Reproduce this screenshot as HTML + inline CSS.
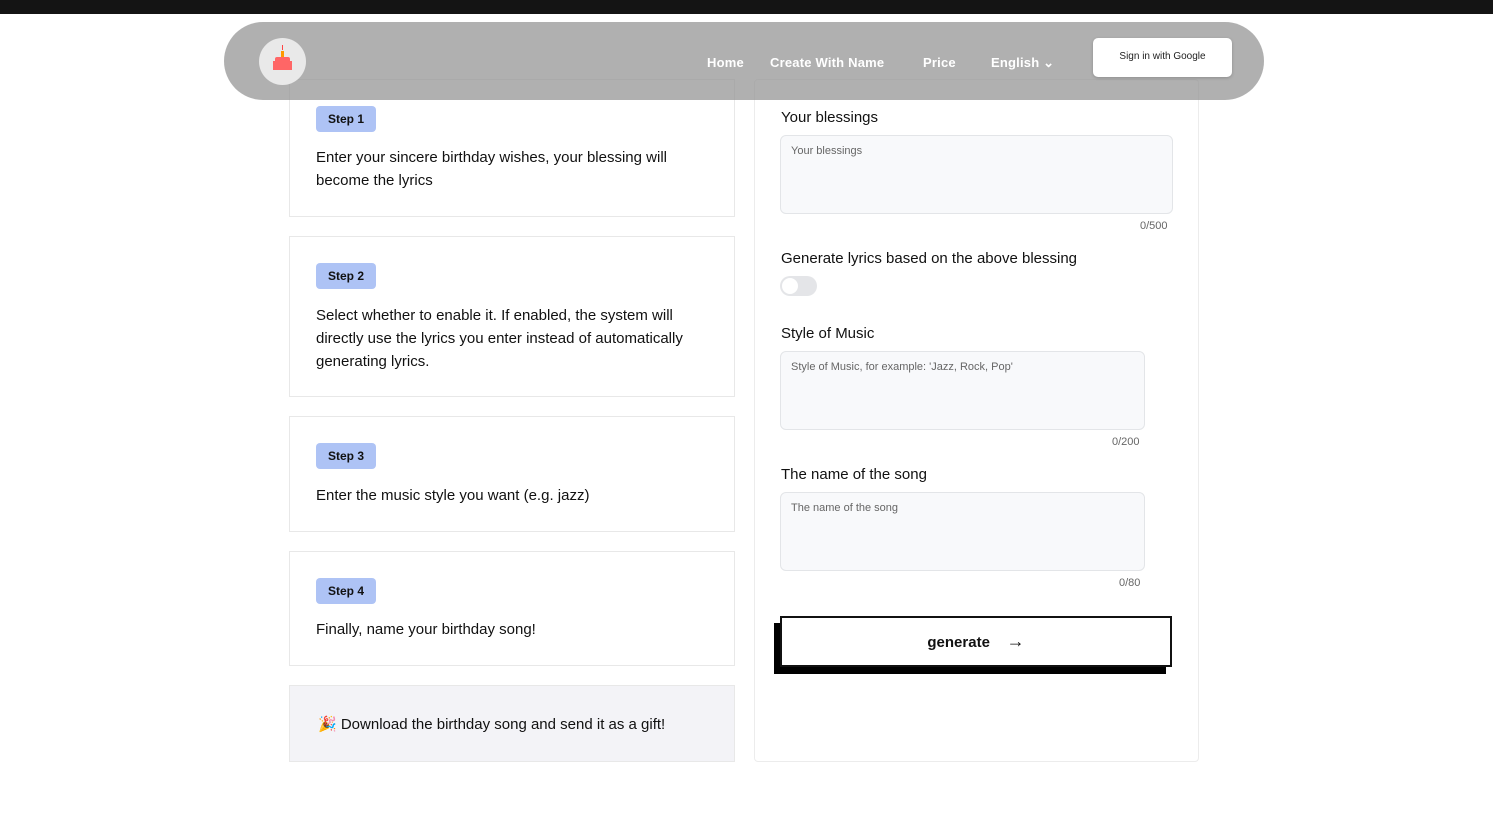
<!DOCTYPE html>
<html><head><meta charset="utf-8"><style>
*{box-sizing:border-box;margin:0;padding:0}
body{width:1493px;height:823px;background:#fff;font-family:"Liberation Sans",sans-serif;color:#111;position:relative;overflow:hidden}
.abs{position:absolute}
.card{position:absolute;left:289px;width:446px;border:1px solid #e8e8e8;background:#fff}
.step{position:absolute;left:26px;width:60px;height:26px;background:#aec3f5;border-radius:4px;font-size:12px;font-weight:bold;line-height:26px;text-align:center;color:#111}
.txt{position:absolute;left:26px;font-size:15px;line-height:23px;color:#111;width:390px}
.lbl{position:absolute;left:781px;font-size:15px;color:#111}
.ta{position:absolute;left:780px;background:#f8f9fb;border:1px solid #e3e5e8;border-radius:6px;font-size:11px;color:#666;padding:9px 10px}
.cnt{position:absolute;font-size:11px;color:#666}
.nav{position:absolute;top:55px;color:#fff;font-size:13px;font-weight:bold;letter-spacing:.2px}
</style></head><body>
<div class="abs" style="left:0;top:0;width:1493px;height:14px;background:#141414"></div>

<div class="card" style="top:79px;height:138px">
<div class="step" style="top:26px">Step 1</div>
<div class="txt" style="top:66px">Enter your sincere birthday wishes, your blessing will become the lyrics</div></div>
<div class="card" style="top:236px;height:161px">
<div class="step" style="top:26px">Step 2</div>
<div class="txt" style="top:67px;width:392px">Select whether to enable it. If enabled, the system will directly use the lyrics you enter instead of automatically generating lyrics.</div></div>
<div class="card" style="top:416px;height:116px">
<div class="step" style="top:26px">Step 3</div>
<div class="txt" style="top:67px">Enter the music style you want (e.g. jazz)</div></div>
<div class="card" style="top:551px;height:115px">
<div class="step" style="top:26px">Step 4</div>
<div class="txt" style="top:66px">Finally, name your birthday song!</div></div>
<div class="card" style="top:685px;height:77px;background:#f3f3f7">
<div class="txt" style="top:27px;left:28px;width:420px">🎉 Download the birthday song and send it as a gift!</div></div>

<div class="abs" style="left:754px;top:79px;width:445px;height:683px;border:1px solid #ececec;border-radius:4px"></div>
<div class="lbl" style="top:109px">Your blessings</div>
<div class="ta" style="top:135px;width:393px;height:79px">Your blessings</div>
<div class="cnt" style="top:220px;left:1140px">0/500</div>
<div class="lbl" style="top:250px">Generate lyrics based on the above blessing</div>
<div class="abs" style="left:780px;top:276px;width:37px;height:20px;border-radius:10px;background:#e4e5e8"><div class="abs" style="left:2px;top:2px;width:16px;height:16px;border-radius:50%;background:#fff"></div></div>
<div class="lbl" style="top:325px">Style of Music</div>
<div class="ta" style="top:351px;width:365px;height:79px">Style of Music, for example: 'Jazz, Rock, Pop'</div>
<div class="cnt" style="top:436px;left:1112px">0/200</div>
<div class="lbl" style="top:466px">The name of the song</div>
<div class="ta" style="top:492px;width:365px;height:79px">The name of the song</div>
<div class="cnt" style="top:577px;left:1119px">0/80</div>
<div class="abs" style="left:774px;top:623px;width:392px;height:51px;background:#000"></div>
<div class="abs" style="left:780px;top:616px;width:392px;height:51px;background:#fff;border:2px solid #111;text-align:center;line-height:47px;font-size:15px;font-weight:bold">generate &nbsp;&nbsp;&nbsp;<span style="font-size:18px;font-weight:normal">→</span></div>

<div class="abs" style="left:224px;top:22px;width:1040px;height:78px;border-radius:39px;background:rgba(150,150,150,0.75)"></div>
<div class="abs" style="left:259px;top:38px;width:47px;height:47px;border-radius:50%;background:#e9e9e9">
<div class="abs" style="left:23px;top:7px;width:1px;height:5px;background:#f44"></div>
<div class="abs" style="left:22px;top:13px;width:3px;height:6px;background:#f90"></div>
<div class="abs" style="left:16px;top:19px;width:15px;height:4px;background:#f66;border-radius:2px 2px 0 0"></div>
<div class="abs" style="left:14px;top:23px;width:19px;height:9px;background:#f66"></div>
</div>
<div class="nav" style="left:707px">Home</div>
<div class="nav" style="left:770px">Create With Name</div>
<div class="nav" style="left:923px">Price</div>
<div class="nav" style="left:991px">English ⌄</div>
<div class="abs" style="left:1093px;top:38px;width:139px;height:39px;background:#fff;border-radius:5px;font-size:10px;line-height:38px;text-align:center;color:#222;box-shadow:0 1px 3px rgba(0,0,0,.2)">Sign in with Google</div>
</body></html>
